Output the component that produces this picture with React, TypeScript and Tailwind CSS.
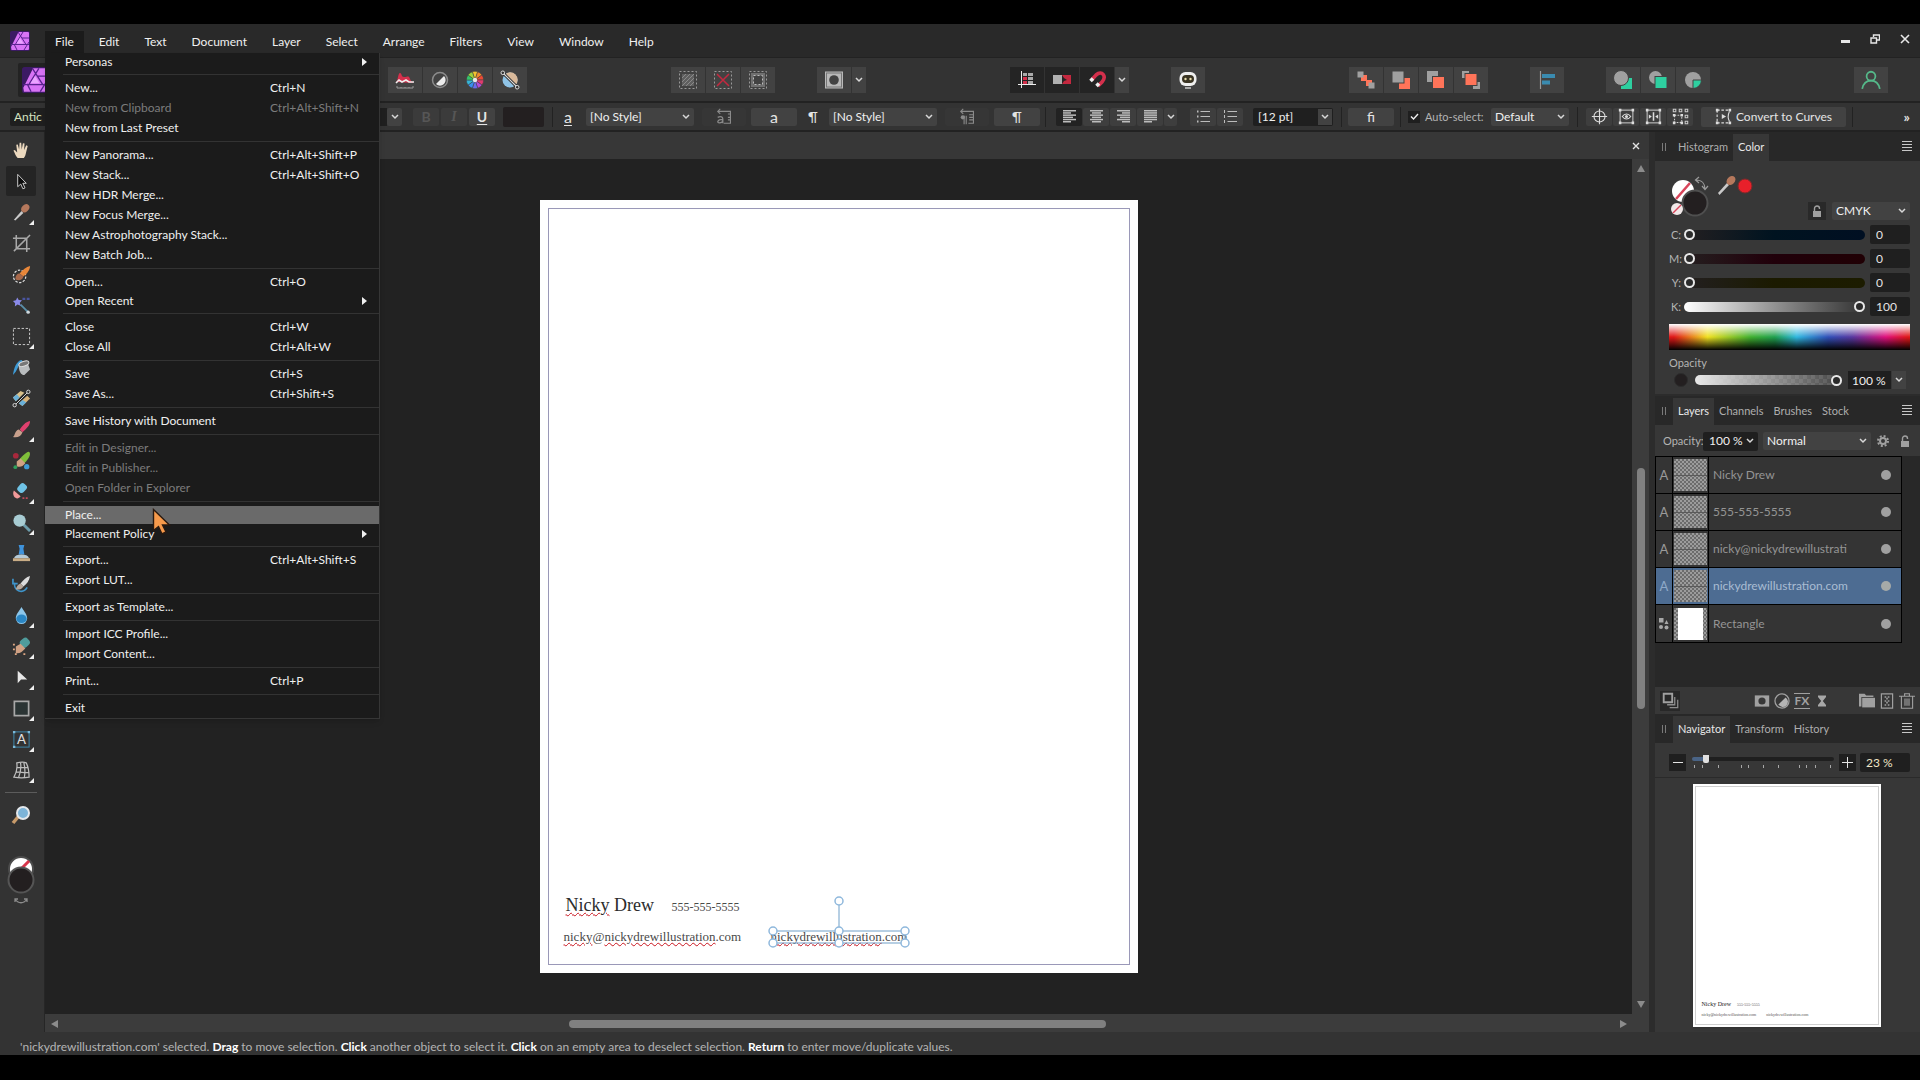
import type { ReactNode } from 'react'
import clsx from 'clsx'

const MENUS = ['File', 'Edit', 'Text', 'Document', 'Layer', 'Select', 'Arrange', 'Filters', 'View', 'Window', 'Help']

interface MenuEntry {
  label: string
  keys?: string
  disabled?: boolean
  submenu?: boolean
  active?: boolean
}

// One inner array per block between separators
const FILE_MENU: MenuEntry[][] = [
  [{ label: 'Personas', submenu: true }],
  [
    { label: 'New...', keys: 'Ctrl+N' },
    { label: 'New from Clipboard', keys: 'Ctrl+Alt+Shift+N', disabled: true },
    { label: 'New from Last Preset' },
  ],
  [
    { label: 'New Panorama...', keys: 'Ctrl+Alt+Shift+P' },
    { label: 'New Stack...', keys: 'Ctrl+Alt+Shift+O' },
    { label: 'New HDR Merge...' },
    { label: 'New Focus Merge...' },
    { label: 'New Astrophotography Stack...' },
    { label: 'New Batch Job...' },
  ],
  [{ label: 'Open...', keys: 'Ctrl+O' }, { label: 'Open Recent', submenu: true }],
  [{ label: 'Close', keys: 'Ctrl+W' }, { label: 'Close All', keys: 'Ctrl+Alt+W' }],
  [{ label: 'Save', keys: 'Ctrl+S' }, { label: 'Save As...', keys: 'Ctrl+Shift+S' }],
  [{ label: 'Save History with Document' }],
  [
    { label: 'Edit in Designer...', disabled: true },
    { label: 'Edit in Publisher...', disabled: true },
    { label: 'Open Folder in Explorer', disabled: true },
  ],
  [{ label: 'Place...', active: true }, { label: 'Placement Policy', submenu: true }],
  [{ label: 'Export...', keys: 'Ctrl+Alt+Shift+S' }, { label: 'Export LUT...' }],
  [{ label: 'Export as Template...' }],
  [{ label: 'Import ICC Profile...' }, { label: 'Import Content...' }],
  [{ label: 'Print...', keys: 'Ctrl+P' }],
  [{ label: 'Exit' }],
]

function Svg({ size = 20, children }: { size?: number; children: ReactNode }) {
  return (
    <svg width={size} height={size} viewBox="0 0 20 20" fill="none" className="shrink-0" aria-hidden="true">
      {children}
    </svg>
  )
}

function Chevron() {
  return (
    <svg width="8" height="6" viewBox="0 0 8 6" fill="none" stroke="#d8d8d8" strokeWidth="1.5" className="shrink-0" aria-hidden="true">
      <path d="M1 1l3 3 3-3" />
    </svg>
  )
}

function AppLogo({ size }: { size: number }) {
  return (
    <Svg size={size}>
      <rect width="20" height="20" rx="2" fill="#3b1a63" />
      <path d="M8.500 1H18a1 1 0 011 1v16a1 1 0 01-1 1H1.500L1 16z" fill="#d873f5" />
      <path d="M8 1l8 12.500M13 1L5 14M19 7l-7 0M1 13.500h18M7 19l-3-6M14 19l5-8" stroke="#5a2390" strokeWidth="1" />
      <path d="M10 7l3.500 5.500h-7z" fill="#e9a4ff" />
    </Svg>
  )
}

/* Main toolbar */

function ToolbarButton({ label, dark, children }: { label: string; dark?: boolean; children: ReactNode }) {
  return (
    <button
      aria-label={label}
      className={clsx('flex h-[26px] w-[34px] items-center justify-center', dark ? 'bg-[#242424]' : 'bg-[#424242]')}
    >
      {children}
    </button>
  )
}

function DropButton({ label }: { label: string }) {
  return (
    <button aria-label={label} className="flex h-[26px] w-[14px] items-center justify-center bg-[#424242]">
      <Chevron />
    </button>
  )
}

const WHEEL = ['#f2c230', '#f08a2c', '#ec4a35', '#e23a6e', '#b44ad8', '#6a6cf0', '#3a8df0', '#35b5d8', '#35c46a', '#9fd23c']

function ColorWheelIcon() {
  return (
    <Svg>
      {WHEEL.map((color, i) => (
        <path key={color} d="M10 10L7.300 1.800a8.600 8.600 0 015.400 0z" fill={color} stroke="#424242" strokeWidth="0.5" transform={`rotate(${i * 36} 10 10)`} />
      ))}
      <circle cx="10" cy="10" r="2.200" fill="#e8e8e8" />
    </Svg>
  )
}

function Toolbar() {
  return (
    <div className="flex h-[46px] items-center border-t border-b-2 border-t-[#222222] border-b-[#222222] bg-[#333333] pr-8">
      <button aria-label="Photo Persona" className="ml-[18px] flex h-[34px] w-[34px] items-center justify-center rounded-xs bg-[#232323]">
        <AppLogo size={26} />
      </button>
      <div className="ml-[336px] flex gap-px">
        <ToolbarButton label="Auto Levels">
          <Svg>
            <path d="M1 12c2-1 2-9 4-9s1 4 4 4 4-1 5 0 1 4 4 5v1z" fill="#d4304c" />
            <path d="M1 13l3-3 3 2 4-2 3 2h5" stroke="#eee" strokeWidth="1.600" />
            <path d="M2 16v2M2 18h16M18 16v2M6 17v1M10 17v1M14 17v1" stroke="#999" />
          </Svg>
        </ToolbarButton>
        <ToolbarButton label="Auto Contrast">
          <Svg>
            <circle cx="10" cy="10" r="7.500" stroke="#8c8c8c" strokeWidth="1.500" />
            <path d="M14 6a5.600 5.600 0 11-8 8z" fill="#ececec" />
          </Svg>
        </ToolbarButton>
        <ToolbarButton label="Auto Colors">
          <ColorWheelIcon />
        </ToolbarButton>
        <ToolbarButton label="Auto White Balance">
          <Svg>
            <circle cx="10" cy="10" r="7.500" fill="#8fc3e6" />
            <path d="M4.700 4.700A7.500 7.500 0 1115.300 15.300z" fill="#d9b99a" />
            <path d="M3 3l14 14" stroke="#222" strokeWidth="3" />
            <path d="M3 3l14 14" stroke="#ddd" strokeWidth="1.200" />
            <circle cx="2.800" cy="2.800" r="1.800" fill="#333" stroke="#ddd" />
            <circle cx="17.200" cy="17.200" r="1.800" fill="#333" stroke="#ddd" />
          </Svg>
        </ToolbarButton>
      </div>
      <div className="ml-36 flex gap-px">
        <ToolbarButton label="Select All">
          <Svg>
            <rect x="1.500" y="1.500" width="17" height="17" stroke="#999" strokeDasharray="2 2" />
            <path d="M4 4h12v12H4z" fill="#606060" />
            <path d="M4 8l4-4M4 12l8-8M4 16L16 4M8 16l8-8M12 16l4-4" stroke="#8a8a8a" />
          </Svg>
        </ToolbarButton>
        <ToolbarButton label="Deselect">
          <Svg>
            <rect x="1.500" y="1.500" width="17" height="17" stroke="#999" strokeDasharray="2 2" />
            <path d="M4 4l12 12M16 4L4 16" stroke="#c4283f" strokeWidth="1.500" />
          </Svg>
        </ToolbarButton>
        <ToolbarButton label="Invert Selection">
          <Svg>
            <rect x="1.500" y="1.500" width="17" height="17" stroke="#999" strokeDasharray="2 2" />
            <rect x="3" y="3" width="14" height="14" fill="#707070" />
            <rect x="5.500" y="5.500" width="9" height="9" fill="#424242" stroke="#bbb" strokeDasharray="2 2" />
          </Svg>
        </ToolbarButton>
      </div>
      <div className="ml-[42px] flex gap-px">
        <ToolbarButton label="Quick Mask">
          <Svg>
            <rect x="1" y="1.500" width="18" height="17" fill="#b9b9b9" />
            <rect x="2.500" y="3" width="15" height="14" stroke="#777" />
            <circle cx="10" cy="10" r="4.800" fill="#424242" />
          </Svg>
        </ToolbarButton>
        <DropButton label="Quick Mask options" />
      </div>
      <div className="ml-36 flex gap-px">
        <ToolbarButton label="Force Pixel Alignment" dark>
          <Svg>
            <path d="M6 3h4v3H6zM11 3h5v3h-5zM11 7h5v3h-5zM11 11h5v3h-5z" fill="#aaa" />
            <path d="M6 7h4v3H6zM6 11h4v3H6z" fill="#d4304c" />
            <path d="M4.500 1v17M1 14.500h18" stroke="#eee" />
          </Svg>
        </ToolbarButton>
        <ToolbarButton label="Move by Whole Pixels" dark>
          <Svg>
            <rect x="1" y="5" width="9" height="9" fill="#b0b0b0" />
            <path d="M10 5h9v9h-9l2-3 3-1-3-2z" fill="#c4283f" />
          </Svg>
        </ToolbarButton>
        <ToolbarButton label="Snapping" dark>
          <Svg>
            <path d="M5 9.500l4-4.500c6-5 11 1 6 7l-4 4" stroke="#d4304c" strokeWidth="3.600" />
            <path d="M3.500 11l2.500-2.500M9.500 16l2.500-2.500" stroke="#eee" strokeWidth="3.600" />
          </Svg>
        </ToolbarButton>
        <DropButton label="Snapping options" />
      </div>
      <div className="ml-[42px] flex">
        <ToolbarButton label="Assistant">
          <Svg>
            <rect x="1.500" y="2" width="17" height="14" rx="6" fill="#efefef" />
            <rect x="4" y="5" width="12" height="8" rx="4" fill="#3a3423" />
            <circle cx="7.500" cy="9" r="1.200" fill="#e9dfae" />
            <circle cx="12.500" cy="9" r="1.200" fill="#e9dfae" />
            <path d="M7 18h6" stroke="#ccc" strokeWidth="1.500" />
          </Svg>
        </ToolbarButton>
      </div>
      <div className="ml-auto flex gap-px">
        <ToolbarButton label="Move to Back">
          <Svg>
            <path d="M5 5h6v5h5v6h-6v-5H5z" fill="#ff7459" />
            <rect x="1.500" y="1.500" width="6" height="6" fill="#a0a0a0" />
            <rect x="12.500" y="12.500" width="6" height="6" fill="#a0a0a0" />
          </Svg>
        </ToolbarButton>
        <ToolbarButton label="Back One">
          <Svg>
            <rect x="8" y="8" width="11" height="11" fill="#ff7459" />
            <rect x="1" y="1" width="12" height="12" fill="#a0a0a0" stroke="#424242" />
          </Svg>
        </ToolbarButton>
        <ToolbarButton label="Forward One">
          <Svg>
            <rect x="1" y="1" width="11" height="11" fill="#a0a0a0" />
            <rect x="6.500" y="6.500" width="12" height="12" fill="#ff7459" stroke="#424242" />
          </Svg>
        </ToolbarButton>
        <ToolbarButton label="Move to Front">
          <Svg>
            <path d="M1 1h7v7H1zM12 12h7v7h-7z" fill="#a0a0a0" />
            <rect x="4" y="3.500" width="12" height="12" fill="#ff7459" stroke="#424242" />
          </Svg>
        </ToolbarButton>
      </div>
      <div className="ml-[42px] flex">
        <ToolbarButton label="Alignment">
          <Svg>
            <path d="M3.500 1v18" stroke="#9a9a9a" strokeWidth="1.200" />
            <path d="M5 4h13v4H5zM5 10.500h8v4H5z" fill="#3a8bb0" />
          </Svg>
        </ToolbarButton>
      </div>
      <div className="ml-[42px] flex gap-px">
        <ToolbarButton label="Insert Behind">
          <Svg>
            <rect x="8" y="8" width="11" height="11" fill="#2ecfa0" />
            <circle cx="8" cy="8" r="7.500" fill="#a0a0a0" stroke="#424242" />
          </Svg>
        </ToolbarButton>
        <ToolbarButton label="Insert in Front">
          <Svg>
            <circle cx="7.500" cy="7.500" r="6.500" fill="#a0a0a0" />
            <rect x="7" y="6.500" width="12" height="12" fill="#2ecfa0" stroke="#424242" />
          </Svg>
        </ToolbarButton>
        <ToolbarButton label="Insert Inside">
          <Svg>
            <circle cx="10" cy="10" r="8" fill="#a0a0a0" />
            <path d="M10 10h8.500a8.500 8.500 0 01-8.500 8.500z" fill="#2ecfa0" stroke="#424242" />
          </Svg>
        </ToolbarButton>
      </div>
      <div className="ml-36 flex">
        <ToolbarButton label="Account">
          <Svg size={22}>
            <circle cx="10" cy="6.500" r="4" stroke="#55b98a" strokeWidth="1.600" />
            <path d="M2 18c1-5 4-7.500 8-7.500s7 2.500 8 7.500" stroke="#55b98a" strokeWidth="1.600" />
          </Svg>
        </ToolbarButton>
      </div>
    </div>
  )
}

/* Context toolbar */

function ContextButton({ label, className, children }: { label: string; className?: string; children: ReactNode }) {
  return (
    <button aria-label={label} className={clsx('flex h-[18px] items-center justify-center rounded-xs', className)}>
      {children}
    </button>
  )
}

function Divider({ className }: { className?: string }) {
  return <div className={clsx('h-5 w-px bg-[#222222]', className)} />
}

function Select({ label, value, className }: { label: string; value: string; className?: string }) {
  return (
    <div className={clsx('relative flex h-[18px] items-center rounded-xs bg-[#424242]', className)}>
      <select aria-label={label} defaultValue={value} className="h-full w-full appearance-none pl-1 text-xs/4 text-[#f0f0f0] outline-none">
        <option>{value}</option>
      </select>
      <span className="pointer-events-none absolute right-1">
        <Chevron />
      </span>
    </div>
  )
}

const ALIGN_LINES = {
  left: [13, 8, 13, 10, 13, 8],
  center: [13, 9, 13, 9, 13, 9],
  right: [13, 8, 13, 10, 13, 8],
  justify: [13, 13, 13, 13, 13, 8],
}

function AlignIcon({ kind }: { kind: keyof typeof ALIGN_LINES }) {
  return (
    <svg width="13" height="13" viewBox="0 0 13 13" fill="#bcbcbc" aria-hidden="true">
      {ALIGN_LINES[kind].map((w, i) => (
        <rect key={i} y={i * 2.2} x={kind === 'right' ? 13 - w : kind === 'center' ? (13 - w) / 2 : 0} width={w} height="1.500" />
      ))}
    </svg>
  )
}

function ListIcon({ numbered }: { numbered?: boolean }) {
  return (
    <svg width="14" height="13" viewBox="0 0 14 13" fill="none" stroke="#bcbcbc" aria-hidden="true">
      <path d="M4.500 1.500H14M4.500 6.500H14M4.500 11.500H14" strokeWidth="1.200" />
      <path d={numbered ? 'M1.500 0v3M1.500 5v3M1.500 10v3' : 'M1 1.500h1.500M1 6.500h1.500M1 11.500h1.500'} strokeWidth={numbered ? 1 : 1.8} />
    </svg>
  )
}

function FrameIcon({ children }: { children: ReactNode }) {
  return (
    <Svg size={17}>
      <rect x="2.500" y="2.500" width="15" height="15" stroke="#ccc" strokeWidth="1.200" />
      <path d="M1 1h3v3H1zM16 1h3v3h-3zM1 16h3v3H1zM16 16h3v3h-3z" fill="#ddd" />
      {children}
    </Svg>
  )
}

function ContextBar() {
  return (
    <div className="flex h-[29px] items-center border-b-2 border-[#222222] bg-[#333333] pl-2.5 text-[#e4e4e4]">
      <div className="flex w-[392px]">
        <input aria-label="Font family" defaultValue="Antic Slab" className="h-[18px] w-[377px] min-w-0 rounded-l-xs bg-[#1f1f1f] px-1 text-xs/4 text-[#d5e2c0] outline-none" />
        <ContextButton label="Font list" className="w-[15px] bg-[#424242]">
          <Chevron />
        </ContextButton>
      </div>
      <div className="ml-[11px] flex gap-0.5 font-bold">
        <ContextButton label="Bold" className="w-[26px] bg-[#3b3b3b] text-sm/4 text-[#565656]">
          B
        </ContextButton>
        <ContextButton label="Italic" className="w-[26px] bg-[#3b3b3b] text-sm/4 text-[#565656]">
          <i className="font-['Liberation_Serif',serif]">I</i>
        </ContextButton>
        <ContextButton label="Underline" className="w-[26px] bg-[#424242] text-sm/4 underline underline-offset-2">
          U
        </ContextButton>
      </div>
      <button aria-label="Text color" className="ml-2 h-5 w-[41px] rounded-xs bg-[#231f20]" />
      <Divider className="ml-2" />
      <span className="ml-[11px] w-2.5 text-base/4 underline underline-offset-2">a</span>
      <Select label="Character style" value="[No Style]" className="ml-3 w-[108px]" />
      <ContextButton label="Update character style" className="ml-2 w-[44px] bg-[#363636]">
        <Svg size={17}>
          <path d="M3 4h14v14H9M14 7h3M14 11h3M14 14h3M5 1L2 4l3 3" stroke="#8a8a8a" strokeWidth="1.300" />
          <path d="M2 11c4-2 6 0 6 2v5M8 13.500c-7 0-7 4-4 4 2 0 4-1 4-3" stroke="#8a8a8a" strokeWidth="1.500" />
        </Svg>
      </ContextButton>
      <ContextButton label="Character panel" className="ml-[5px] w-[46px] bg-[#424242] text-base/4">
        a
      </ContextButton>
      <span className="ml-[11px] w-2 text-sm/4">¶</span>
      <Select label="Paragraph style" value="[No Style]" className="ml-[13px] w-[108px]" />
      <ContextButton label="Update paragraph style" className="ml-2 w-[44px] bg-[#363636]">
        <Svg size={17}>
          <path d="M3 4h14v14h-6M12 8h5M12 11h5M12 14h5M5 1L2 4l3 3M6 9v10M8.500 9v10" stroke="#8a8a8a" strokeWidth="1.300" />
          <circle cx="4.500" cy="11" r="2.500" fill="#8a8a8a" />
        </Svg>
      </ContextButton>
      <ContextButton label="Paragraph panel" className="ml-[5px] w-[46px] bg-[#424242] text-sm/4">
        ¶
      </ContextButton>
      <Divider className="ml-[5px]" />
      <div className="ml-2.5 flex gap-px">
        <ContextButton label="Align left" className="w-[26px] bg-[#222222]">
          <AlignIcon kind="left" />
        </ContextButton>
        <ContextButton label="Align center" className="w-[26px] bg-[#3e3e3e]">
          <AlignIcon kind="center" />
        </ContextButton>
        <ContextButton label="Align right" className="w-[26px] bg-[#3e3e3e]">
          <AlignIcon kind="right" />
        </ContextButton>
        <ContextButton label="Justify" className="w-[26px] bg-[#3e3e3e]">
          <AlignIcon kind="justify" />
        </ContextButton>
        <ContextButton label="Justify options" className="w-[13px] bg-[#3e3e3e]">
          <Chevron />
        </ContextButton>
      </div>
      <div className="ml-[13px] flex gap-px">
        <ContextButton label="Bullets" className="w-[26px] bg-[#3e3e3e]">
          <ListIcon />
        </ContextButton>
        <ContextButton label="Numbering" className="w-[26px] bg-[#3e3e3e]">
          <ListIcon numbered />
        </ContextButton>
      </div>
      <div className="ml-2.5 flex w-20 rounded-xs bg-[#1f1f1f] p-px">
        <input aria-label="Leading" defaultValue="[12 pt]" className="w-[64px] px-1 text-xs/4 text-[#f0f0f0] outline-none" />
        <button aria-label="Leading options" className="flex w-[14px] items-center justify-center bg-[#424242]">
          <Chevron />
        </button>
      </div>
      <Divider className="ml-2" />
      <ContextButton label="Ligatures" className="ml-1.5 w-[46px] bg-[#424242] text-sm/4">
        fi
      </ContextButton>
      <Divider className="ml-1.5" />
      <label className="ml-[7px] flex items-center gap-[5px] text-[11px]/4 text-[#b4b4b4]">
        <span className="relative flex size-3 items-center justify-center bg-[#1f1f1f]">
          <input type="checkbox" defaultChecked className="absolute inset-0 appearance-none" />
          <svg width="9" height="7" viewBox="0 0 9 7" fill="none" stroke="#eee" strokeWidth="1.400" className="relative" aria-hidden="true">
            <path d="M1 3.500l2.500 2.500L8 1" />
          </svg>
        </span>
        <span className="w-[62px] whitespace-nowrap">Auto-select:</span>
      </label>
      <Select label="Auto-select" value="Default" className="ml-1 w-[78px]" />
      <Divider className="ml-2" />
      <div className="ml-2 flex gap-px">
        <ContextButton label="Transform origin" className="w-[26px] bg-[#3e3e3e]">
          <Svg size={17}>
            <circle cx="10" cy="10" r="6.500" stroke="#ddd" strokeWidth="1.300" />
            <path d="M10 1v18M1 10h18" stroke="#ddd" strokeWidth="1.300" />
          </Svg>
        </ContextButton>
        <ContextButton label="Hide selection while dragging" className="w-[26px] bg-[#3e3e3e]">
          <FrameIcon>
            <path d="M5 10c3-4 7-4 10 0-3 4-7 4-10 0z" stroke="#ddd" strokeWidth="1.300" />
            <circle cx="10" cy="10" r="1.800" fill="#ddd" />
          </FrameIcon>
        </ContextButton>
        <ContextButton label="Show alignment handles" className="w-[26px] bg-[#3e3e3e]">
          <FrameIcon>
            <path d="M10 5v10" stroke="#ddd" strokeWidth="1.800" />
            <path d="M4.500 7.500L8 10l-3.500 2.500zM15.500 7.500L12 10l3.500 2.500z" fill="#ddd" />
          </FrameIcon>
        </ContextButton>
        <ContextButton label="Transform objects separately" className="w-[26px] bg-[#3e3e3e]">
          <Svg size={17}>
            <path d="M1.500 1.500h3v3h-3zM8.500 1.500h3v3h-3zM15.500 1.500h3v3h-3zM15.500 8.500h3v3h-3zM15.500 15.500h3v3h-3z" stroke="#ccc" strokeWidth="1.200" />
            <path d="M3 8.500h8.500V17H3z" stroke="#ccc" strokeWidth="1.200" strokeDasharray="2 1.500" />
            <path d="M1 7h3v3H1zM10 7h3v3h-3zM1 16h3v3H1zM10 16h3v3h-3z" fill="#ddd" />
          </Svg>
        </ContextButton>
      </div>
      <button className="ml-2 flex h-5 w-[145px] items-center justify-center gap-1 rounded-xs bg-[#424242] text-xs/4 whitespace-nowrap">
        <Svg size={17}>
          <path d="M2.500 2.500h13M2.500 2.500v15M2.500 17.500h14" stroke="#ddd" strokeWidth="1.300" strokeDasharray="3 2" />
          <path d="M17 4c-2 4-2 8 0 12" stroke="#ddd" strokeWidth="1.300" />
          <path d="M1 1h3v3H1zM16 1h3v3h-3zM1 16h3v3H1zM16 16h3v3h-3zM8 7l5 3-5 3z" fill="#ddd" />
        </Svg>
        Convert to Curves
      </button>
      <Divider className="ml-1.5" />
      <button aria-label="More" className="mr-2.5 ml-auto text-sm/4 font-bold">
        »
      </button>
    </div>
  )
}

/* Tools down the left side */

const TOOLS: { name: string; flyout?: boolean; active?: boolean; art: ReactNode }[] = [
  {
    name: 'View',
    art: <path d="M6 18c-2-2-3-5-4.500-8l1.500-.5L5.500 12 4.500 4l1.600-.3L7.500 9 8 1.800h1.700L10.200 9l1.300-6.600 1.700.2-.5 7 2.300-5 1.500.6-1.700 7c-.6 3-1 4-2.300 5.800z" fill="#ecd9bf" />,
  },
  {
    name: 'Move',
    active: true,
    art: <path d="M6 2.500v13l3.200-2.800 2.300 5 2.200-1-2.300-4.800H15z" fill="#0c0c0c" stroke="#d0d0d0" />,
  },
  {
    name: 'Color Picker',
    flyout: true,
    art: (
      <>
        <path d="M2 17.500l8-9 2 2-8.500 8z" fill="#c9c9c9" />
        <ellipse cx="14" cy="5.500" rx="4.800" ry="3.600" transform="rotate(-45 14 5.500)" fill="#b5785c" />
      </>
    ),
  },
  {
    name: 'Crop',
    art: <path d="M4.500 1v14.500H19M1 4.500h14.500V19M2 18L19 1" stroke="#a8a8a8" strokeWidth="1.600" />,
  },
  {
    name: 'Selection Brush',
    art: (
      <>
        <circle cx="8" cy="12" r="6.500" stroke="#ddd" strokeWidth="1.300" strokeDasharray="2.500 1.500" />
        <path d="M8 9c3-4 7-7 11-8 0 4-3 8-7 11z" fill="#e8873a" />
        <path d="M3.500 15c0-4 2-6 4.500-6l4 3c-1 4-5 5-8.500 3z" fill="#a8694b" />
      </>
    ),
  },
  {
    name: 'Flood Select',
    art: (
      <>
        <path d="M9 9l8 8" stroke="#5a8fa8" strokeWidth="2" />
        <circle cx="17" cy="17" r="1.800" fill="#cfd8dd" />
        <path d="M5.500 1.500l1.600 2.800 3.400.2-2.300 2.500.9 3.300-3.300-1.300L3 11l.3-3.300L1 5.200l3.200-.7z" fill="#8a8ae8" />
        <path d="M11 3h3M15.500 3h3" stroke="#4a55a0" strokeWidth="2.500" />
      </>
    ),
  },
  {
    name: 'Marquee Selection',
    flyout: true,
    art: <rect x="1.500" y="1.500" width="17" height="17" stroke="#cfcfcf" strokeDasharray="2.500 1.800" />,
  },
  {
    name: 'Flood Fill',
    art: (
      <>
        <path d="M1 18C2 10 5 3 10 2c2 1 1 3-1 4-3 2-3 7-8 12z" fill="#3f9bd6" />
        <path d="M7 7l9-3 3 8-6 6c-4 0-6-5-6-11z" fill="#b9bcbe" />
        <ellipse cx="12.500" cy="6" rx="5.500" ry="2.500" transform="rotate(-18 12.500 6)" fill="#777" stroke="#ddd" />
      </>
    ),
  },
  {
    name: 'Gradient',
    art: (
      <>
        <path d="M1 9l8-7 4 2-9 9z" fill="#d9c08a" />
        <path d="M1 9l3 4 4-4-3-3.500z" fill="#6ab0d8" />
        <path d="M7 15l9-8 3 3-8 8z" fill="#d9b27a" />
        <path d="M7 15l4 3 4-4-4-2.500z" fill="#6ab0d8" />
        <path d="M3 17L17 3" stroke="#222" strokeWidth="2.500" />
        <path d="M3 17L17 3" stroke="#ddd" />
        <circle cx="2.800" cy="17" r="1.800" fill="#333" stroke="#ddd" />
        <circle cx="17.200" cy="3" r="1.800" fill="#333" stroke="#ddd" />
      </>
    ),
  },
  {
    name: 'Paint Brush',
    flyout: true,
    art: (
      <>
        <path d="M8 10c3-4 6-8 11-9 0 5-4 8-8 12z" fill="#e0406e" />
        <path d="M1 18c2-1 2-7 6-8l4 3c-1 4-5 6-10 5z" fill="#c8a08c" />
      </>
    ),
  },
  {
    name: 'Color Replacement',
    art: (
      <>
        <path d="M8 9c1-2 8-9 10-8s1 6-5 12z" fill="#7fbf3a" />
        <path d="M5 11l4-3 5 5c-3 4-6 4-9 3z" fill="#d0a184" />
        <circle cx="4" cy="5" r="3" fill="#a8283c" />
        <circle cx="3.500" cy="17" r="2" fill="#2ea05a" />
        <circle cx="15.500" cy="16.500" r="2.800" fill="#3f9bd6" />
      </>
    ),
  },
  {
    name: 'Erase Brush',
    flyout: true,
    art: (
      <>
        <rect x="7" y="1.500" width="8" height="10" rx="3" transform="rotate(42 11 6)" fill="#6fc3e6" />
        <path d="M2 9l7 6c-2 3-5 3-7 0-1-2-1-4 0-6z" fill="#f29a9a" />
        <path d="M11 17h2M14.500 17h2" stroke="#c04a5a" strokeWidth="2" />
      </>
    ),
  },
  {
    name: 'Dodge Brush',
    flyout: true,
    art: (
      <>
        <path d="M11 11l8 8" stroke="#6c9cab" strokeWidth="3" />
        <circle cx="8" cy="8" r="6.500" fill="#a8ccd3" />
      </>
    ),
  },
  {
    name: 'Clone Brush',
    art: (
      <>
        <path d="M7 1h6l-1 4 1 6H7l1-6z" fill="#3f93dc" />
        <path d="M2 15c1-3 4-4 8-4s7 1 8 4z" fill="#b5c9d6" />
        <path d="M1 15h18v3H1z" fill="#c9ad86" />
      </>
    ),
  },
  {
    name: 'Undo Brush',
    art: (
      <>
        <path d="M3 8c-2 8 8 13 13 5M1 4v5h5" stroke="#3f93c8" strokeWidth="1.800" />
        <path d="M9 9c3-4 6-7 10-8-1 5-3 8-7 11z" fill="#dcdcdc" />
        <path d="M4 15c1-3 2-5 5-6l3 3c-2 3-5 4-8 3z" fill="#b8a89c" />
      </>
    ),
  },
  {
    name: 'Blur Brush',
    flyout: true,
    art: (
      <>
        <path d="M10 1c3 5 6 8 6 12a6 6 0 01-12 0c0-4 3-7 6-12z" fill="#8cc6ea" />
        <ellipse cx="10" cy="13.500" rx="5.500" ry="4.500" fill="#2a86c4" />
      </>
    ),
  },
  {
    name: 'Healing Brush',
    flyout: true,
    art: (
      <>
        <rect x="9" y="1" width="9" height="10" rx="3.500" transform="rotate(50 13.500 6)" fill="#4f9c9c" />
        <path d="M4 10l5-3 5 5c-3 3-6 6-10 5z" fill="#d0a184" />
        <path d="M1 8h2M1 13h2M3 18h2M12 18h2" stroke="#e0a884" strokeWidth="2" />
      </>
    ),
  },
  { name: 'Node', flyout: true, art: <path d="M6 3v13l3.500-4H16z" fill="#e8e8e8" /> },
  { name: 'Rectangle', flyout: true, art: <rect x="2.500" y="2.500" width="15" height="15" fill="#2b3434" stroke="#a8a8a8" strokeWidth="1.800" /> },
  {
    name: 'Artistic Text',
    flyout: true,
    art: (
      <>
        <rect x="2" y="2" width="16" height="16" stroke="#3f8bb0" />
        <path d="M1 1h2.500v2.500H1zM16.500 1H19v2.500h-2.500zM1 16.500h2.500V19H1z" fill="#7ab8d8" />
        <text x="10" y="15" textAnchor="middle" fontSize="14" fill="#e0e0e0">A</text>
      </>
    ),
  },
  {
    name: 'Mesh Warp',
    flyout: true,
    art: <path d="M5 2c4-1 8-1 10 0 2 4 3 8 3 15-5 1-11 1-16 0 3-5 4-9 3-15zM9 2c1 6 0 10-2 15M12.500 2c1.500 6 1.500 10 .5 15.500M5 7h12M3.500 12c4-1 10 1 14 0" stroke="#bdbdbd" strokeWidth="1.300" />,
  },
]

function ToolBox() {
  return (
    <div className="flex w-[45px] shrink-0 flex-col items-center border-r border-[#262626] bg-[#333333] pt-[3px] pr-0.5">
      {TOOLS.map((tool) => (
        <button
          key={tool.name}
          aria-label={`${tool.name} Tool`}
          className={clsx('relative mb-px flex h-[30px] w-[30px] items-center justify-center rounded-xs', tool.active && 'bg-[#242424]')}
        >
          <Svg size={19}>{tool.art}</Svg>
          {tool.flyout && (
            <svg width="5" height="5" viewBox="0 0 5 5" fill="#f0f0f0" className="absolute right-0.5 bottom-0.5" aria-hidden="true">
              <path d="M5 0v5H0z" />
            </svg>
          )}
        </button>
      ))}
      <div className="mt-1.5 h-px w-8 bg-[#5c5c5c]" />
      <button aria-label="Zoom Tool" className="mt-3 flex size-5 items-center justify-center">
        <Svg>
          <path d="M7 12l-5 6" stroke="#c79a6a" strokeWidth="3.500" />
          <circle cx="12" cy="8" r="6" fill="#7db4d8" stroke="#e4e8ec" strokeWidth="2" />
        </Svg>
      </button>
      <svg width="28" height="50" viewBox="0 0 28 50" fill="none" className="mt-[30px]" aria-hidden="true">
        <circle cx="14" cy="14" r="12" fill="#fff" stroke="#4c4c4c" strokeWidth="2" />
        <path d="M10 18L22 6" stroke="#d8344a" strokeWidth="3" />
        <circle cx="14" cy="25" r="12.500" fill="#231f20" stroke="#555" strokeWidth="2" />
        <path d="M8 44c3 5 9 5 12 0M8 47v-3h3M20 47v-3h-3" stroke="#8c8c8c" strokeWidth="1.300" />
      </svg>
    </div>
  )
}

/* Canvas */

const HANDLES = [[6, 36], [72, 36], [138, 36], [6, 48], [72, 48], [138, 48], [72, 6]]

function Misspelled({ children }: { children: string }) {
  return <span className="underline decoration-[#c8141e] decoration-wavy decoration-1 underline-offset-1">{children}</span>
}

function Artboard() {
  return (
    <div className="relative aspect-[598/773] w-[598px] bg-white font-['Liberation_Serif',serif] text-[#4a4a4a]">
      <div className="absolute inset-2 border border-[#9a98b8]" />
      <p className="absolute bottom-[54px] left-[26px] text-lg/7 text-[#2c2c2c]">
        <Misspelled>Nicky</Misspelled> Drew
      </p>
      <p className="absolute bottom-[58px] left-[132px] text-xs/4">555-555-5555</p>
      <p className="absolute bottom-7 left-6 text-[13px]/4">
        <Misspelled>nicky</Misspelled>@<Misspelled>nickydrewillustration</Misspelled>.com
      </p>
      <p className="absolute bottom-7 left-[231px] text-[13px]/4">
        <Misspelled>nickydrewillustration</Misspelled>.com
      </p>
      <svg width="144" height="54" viewBox="0 0 144 54" fill="none" className="absolute bottom-6 left-[227px]" aria-hidden="true">
        <path d="M6 36h132v12H6zM72 6v30" stroke="#6f9fc8" />
        {HANDLES.map(([cx, cy]) => (
          <circle key={`${cx}-${cy}`} cx={cx} cy={cy} r="4" fill="#fff" stroke="#8fb8dc" strokeWidth="1.500" />
        ))}
      </svg>
    </div>
  )
}

function Workspace() {
  return (
    <main className="flex min-w-0 flex-1 flex-col">
      <div className="flex h-[27px] items-center justify-end bg-[#373737] pr-[9px]">
        <button aria-label="Close document">
          <svg width="8" height="8" viewBox="0 0 8 8" stroke="#e4e4e4" strokeWidth="1.400" aria-hidden="true">
            <path d="M1 1l6 6M7 1L1 7" />
          </svg>
        </button>
      </div>
      <div className="flex flex-1">
        <div className="flex flex-1 items-center justify-center bg-[#222222]">
          <Artboard />
        </div>
        <div className="flex w-[17px] flex-col items-center bg-[#3c3c3c] py-1.5">
          <svg width="8" height="7" viewBox="0 0 8 7" fill="#8c8c8c" aria-hidden="true">
            <path d="M4 0l4 7H0z" />
          </svg>
          <div className="flex w-2 flex-1 flex-col">
            <div className="flex-[296]" />
            <div className="flex-[240] rounded-full bg-[#808080]" />
            <div className="flex-[292]" />
          </div>
          <svg width="8" height="7" viewBox="0 0 8 7" fill="#8c8c8c" aria-hidden="true">
            <path d="M4 7l4-7H0z" />
          </svg>
        </div>
      </div>
      <div className="flex h-[18px] items-center bg-[#3c3c3c] pt-0.5 pr-[22px] pl-1.5">
        <svg width="7" height="8" viewBox="0 0 7 8" fill="#8c8c8c" aria-hidden="true">
          <path d="M0 4l7-4v8z" />
        </svg>
        <div className="flex h-2 flex-1">
          <div className="flex-[511]" />
          <div className="flex-[538] rounded-full bg-[#808080]" />
          <div className="flex-[514]" />
        </div>
        <svg width="7" height="8" viewBox="0 0 7 8" fill="#8c8c8c" aria-hidden="true">
          <path d="M7 4L0 0v8z" />
        </svg>
      </div>
    </main>
  )
}

/* Right-hand panels */

function PanelTabs({ tabs, active }: { tabs: string[]; active: string }) {
  return (
    <div className="flex h-[29px] items-end bg-[#282828] pr-2">
      <span className="flex h-full w-[18px] items-center justify-center gap-0.5">
        <span className="h-2 w-px bg-[#7a7a7a]" />
        <span className="h-2 w-px bg-[#7a7a7a]" />
      </span>
      {tabs.map((tab) => (
        <button
          key={tab}
          className={clsx('h-[27px] px-[5px] pb-0.5 text-[11px]/4', tab === active ? 'bg-[#373737] text-[#e8e8e8]' : 'text-[#aeaeae]')}
        >
          {tab}
        </button>
      ))}
      <button aria-label="Panel preferences" className="mb-2.5 ml-auto flex w-2.5 flex-col gap-0.5">
        <span className="h-px bg-[#c8c8c8]" />
        <span className="h-px bg-[#c8c8c8]" />
        <span className="h-px bg-[#c8c8c8]" />
        <span className="h-px bg-[#c8c8c8]" />
      </button>
    </div>
  )
}

const THUMB =
  'appearance-none outline-none [&::-webkit-slider-thumb]:size-[11px] [&::-webkit-slider-thumb]:appearance-none [&::-webkit-slider-thumb]:rounded-full [&::-webkit-slider-thumb]:border-2 [&::-webkit-slider-thumb]:border-[#e8e8e8] [&::-webkit-slider-thumb]:bg-[#2a2a2a]'

const CHANNELS = [
  { name: 'C', value: 0, track: 'bg-linear-to-r from-[#231f20] via-[#001320] to-[#000f22]' },
  { name: 'M', value: 0, track: 'bg-linear-to-r from-[#231f20] via-[#20000a] to-[#200004]' },
  { name: 'Y', value: 0, track: 'bg-linear-to-r from-[#231f20] via-[#1b1a00] to-[#1c1c00]' },
  { name: 'K', value: 100, track: 'bg-linear-to-r from-white to-[#333333]' },
]

function LockIcon({ color = '#a0a0a0' }: { color?: string }) {
  return (
    <svg width="10" height="13" viewBox="0 0 10 13" fill="none" aria-hidden="true">
      <path d="M2.500 6V3.500a2.500 2.500 0 015 0V4" stroke={color} strokeWidth="1.400" />
      <rect x="1" y="6" width="8" height="6" fill={color} />
    </svg>
  )
}

function ColorPanel() {
  return (
    <section>
      <PanelTabs tabs={['Histogram', 'Color']} active="Color" />
      <div className="bg-[#373737] pr-2.5 pb-[5px] pl-3.5">
        <div className="flex pt-3.5">
          <svg width="88" height="45" viewBox="0 0 88 45" fill="none" aria-hidden="true">
            <circle cx="14" cy="16" r="11" fill="#fff" />
            <path d="M7 24L21 8" stroke="#d8445a" strokeWidth="2.500" />
            <circle cx="26" cy="28" r="12.500" fill="#231f20" stroke="#4f4f4f" strokeWidth="2" />
            <circle cx="8" cy="34" r="6" fill="#f0e8e8" />
            <path d="M4 38l8-8" stroke="#d8445a" strokeWidth="1.500" />
            <path d="M27 5c6 0 9 4 9 9M30 2l-3.500 3L30 8M33 11l3 3.500L39 11" stroke="#9a9a9a" strokeWidth="1.200" />
            <path d="M49 18l9-10 2 2-9.500 10z" fill="#c9c9c9" />
            <ellipse cx="62" cy="5.500" rx="5" ry="3.800" transform="rotate(-45 62 5.500)" fill="#b5785c" />
            <circle cx="76" cy="11" r="7" fill="#e8202a" stroke="#7a2a2a" />
          </svg>
          <div className="ml-auto flex items-end gap-1.5 self-end">
            <button aria-label="Lock color" className="flex size-[18px] items-center justify-center bg-[#292929]">
              <LockIcon />
            </button>
            <Select label="Color mode" value="CMYK" className="w-[78px]" />
          </div>
        </div>
        <div className="mt-[5px] flex flex-col gap-[5px]">
          {CHANNELS.map((channel) => (
            <div key={channel.name} className="flex items-center">
              <label htmlFor={`channel-${channel.name}`} className="w-3 text-right text-[11px]/4 text-[#b4b4b4]">
                {channel.name}:
              </label>
              <input id={`channel-${channel.name}`} type="range" min="0" max="100" defaultValue={channel.value} className={clsx('ml-[3px] h-2.5 min-w-0 flex-1 rounded-full', THUMB, channel.track)} />
              <input aria-label={`${channel.name} value`} defaultValue={channel.value} className="ml-[5px] h-[19px] w-10 rounded-xs bg-[#1f1f1f] px-1.5 text-xs/4 text-[#e4e4e4] outline-none" />
            </div>
          ))}
        </div>
        <div className="mt-2 h-[26px] bg-[linear-gradient(to_bottom,#fff_0%,transparent_50%,#000_100%),linear-gradient(to_right,#e01818_2%,#f0e020_16%,#40b030_34%,#20a050_44%,#30b8e0_53%,#3050b8_66%,#5838a0_76%,#e0107c_90%,#e01818_99%)]" />
        <label htmlFor="fill-opacity" className="mt-[5px] block text-[11px]/4 text-[#b4b4b4]">
          Opacity
        </label>
        <div className="flex items-center">
          <span className="ml-[5px] size-3.5 rounded-full border border-[#2c2c2c] bg-[#231f20]" />
          <input id="fill-opacity" type="range" min="0" max="100" defaultValue="100" className={clsx('ml-[7px] h-2.5 min-w-0 flex-1 rounded-full bg-[linear-gradient(to_right,#e8e8e8,#3c3c3c88),repeating-conic-gradient(#6c6c6c_0_25%,#4c4c4c_0_50%)] bg-size-[100%_100%,8px_8px]', THUMB)} />
          <input aria-label="Opacity value" defaultValue="100 %" className="ml-1.5 h-[18px] w-[43px] bg-[#1f1f1f] px-1 text-xs/4 text-[#f0f0f0] outline-none" />
          <button aria-label="Opacity options" className="mr-1 ml-px flex h-[18px] w-3.5 items-center justify-center bg-[#424242]">
            <Chevron />
          </button>
        </div>
      </div>
    </section>
  )
}

const LAYERS = [
  { name: 'Nicky Drew', kind: 'text' },
  { name: '555-555-5555', kind: 'text' },
  { name: 'nicky@nickydrewillustrati', kind: 'text' },
  { name: 'nickydrewillustration.com', kind: 'text', selected: true },
  { name: 'Rectangle', kind: 'shape' },
]

function LayersPanel() {
  return (
    <section className="flex flex-1 flex-col border-t-2 border-[#2c2c2c]">
      <PanelTabs tabs={['Layers', 'Channels', 'Brushes', 'Stock']} active="Layers" />
      <div className="flex h-[31px] items-center bg-[#373737] pt-px pl-2">
        <label htmlFor="layer-opacity" className="w-10 text-[11px]/4 text-[#b4b4b4]">
          Opacity:
        </label>
        <div className="flex h-[19px] w-[55px] items-center rounded-xs bg-[#1f1f1f] pr-1">
          <input id="layer-opacity" defaultValue="100 %" className="min-w-0 flex-1 pl-1.5 text-xs/4 text-[#f0f0f0] outline-none" />
          <Chevron />
        </div>
        <Select label="Blend mode" value="Normal" className="ml-[5px] w-[108px]" />
        <button aria-label="Blend ranges" className="ml-1.5">
          <svg width="12" height="12" viewBox="0 0 12 12" fill="none" stroke="#a0a0a0" aria-hidden="true">
            <circle cx="6" cy="6" r="3" strokeWidth="2" />
            <circle cx="6" cy="6" r="5" strokeWidth="2" strokeDasharray="2 1.930" />
          </svg>
        </button>
        <button aria-label="Lock layer" className="ml-[11px]">
          <LockIcon />
        </button>
      </div>
      <div className="flex-1 bg-[#282828] pr-[18px]">
        <ul className="border border-black">
          {LAYERS.map((layer) => (
            <li
              key={layer.name}
              className={clsx('flex h-[37px] items-center border-b border-black pr-2.5 last:border-b-0', layer.selected ? 'bg-[#4d6c92]' : 'bg-[#343434]')}
            >
              <span className={clsx('flex w-4 justify-center text-[13px]/4', layer.selected ? 'text-[#8fa9c9]' : 'text-[#9a9a9a]')}>
                {layer.kind === 'text' ? (
                  'A'
                ) : (
                  <svg width="10" height="12" viewBox="0 0 10 12" fill="#a8a8a8" aria-hidden="true">
                    <path d="M0 0h4.500v4.500H0zM7.500 2l2 4h-4z" />
                    <circle cx="2" cy="9" r="2" />
                    <circle cx="7.500" cy="9.500" r="2" />
                  </svg>
                )}
              </span>
              <span className="flex h-full w-[37px] items-center justify-center border-x border-black">
                <span className="flex h-8 w-[33px] items-center justify-center overflow-hidden bg-[repeating-conic-gradient(#9c9c9c_0_25%,#6c6c6c_0_50%)] bg-size-[4px_4px]">
                  {layer.kind === 'text' ? <span className="h-px w-full bg-[#5a5a5a]" /> : <span className="h-full w-[25px] bg-white" />}
                </span>
              </span>
              <span className={clsx('ml-1 flex-1 text-xs/5 whitespace-nowrap', layer.selected ? 'text-[#a9bcd2]' : 'text-[#949494]')}>{layer.name}</span>
              <button aria-label={`Toggle ${layer.name}`} className={clsx('size-2.5 rounded-full', layer.selected ? 'bg-[#a6aaa8]' : 'bg-[#a0a0a0]')} />
            </li>
          ))}
        </ul>
      </div>
      <div className="flex h-[27px] items-center bg-[#373737] px-[5px]">
        <button aria-label="Edit all layers" className="flex size-5 items-center justify-center bg-[#282828]">
          <Svg size={17}>
            <path d="M2 2h10v10H2z" stroke="#a0a0a0" strokeWidth="2.200" />
            <path d="M6 15h9V6M9 18.500h9.500V9" stroke="#8c8c8c" strokeWidth="1.500" />
          </Svg>
        </button>
        <div className="mr-auto ml-[74px] flex gap-1">
          <button aria-label="Mask layer">
            <Svg size={16}>
              <path d="M1 3h18v14H1z" fill="#a0a0a0" />
              <circle cx="10" cy="10" r="4.500" fill="#373737" />
            </Svg>
          </button>
          <button aria-label="Adjustments">
            <Svg size={16}>
              <circle cx="10" cy="10" r="8.800" stroke="#a0a0a0" strokeWidth="1.600" />
              <path d="M14.500 5.500a6.500 6.500 0 11-9 9z" fill="#b4b4b4" />
            </Svg>
          </button>
          <button aria-label="Layer effects" className="h-4 w-4 border-y border-[#a0a0a0] text-xs/3 font-bold text-[#a0a0a0]">
            FX
          </button>
          <button aria-label="Live filters">
            <Svg size={16}>
              <path d="M5 3h10v2l-4 5 4 5v2H5v-2l4-5-4-5z" fill="#a8a8a8" />
            </Svg>
          </button>
        </div>
        <div className="flex gap-1">
          <button aria-label="New group">
            <Svg size={16}>
              <path d="M0 17V1h7l2 2h9v2H3v12z" fill="#a0a0a0" />
              <path d="M4 6h16v12H4z" fill="#a0a0a0" />
            </Svg>
          </button>
          <button aria-label="New pixel layer">
            <Svg size={16}>
              <path d="M3 1h14v18H3z" stroke="#a0a0a0" strokeWidth="1.500" />
              <path d="M7 4h2v2h2V4h2v2h-2v2H9V6H7zM7 9h2v2h2V9h2v2h-2v2H9v-2H7zM7 14h2v2H7zM11 14h2v2h-2z" fill="#a0a0a0" />
            </Svg>
          </button>
          <button aria-label="Delete layer">
            <Svg size={16}>
              <path d="M0 4h20M7 4V1h6v3M3 4v15h14V4M7.500 7v9M10 7v9M12.500 7v9" stroke="#a0a0a0" strokeWidth="1.400" />
            </Svg>
          </button>
        </div>
      </div>
    </section>
  )
}

const TICKS = [2, 10, 26, 49, 56, 71, 86, 107, 114, 123, 138]

function NavigatorPanel() {
  return (
    <section>
      <PanelTabs tabs={['Navigator', 'Transform', 'History']} active="Navigator" />
      <div className="flex h-[35px] items-center border-b border-[#2a2a2a] bg-[#373737] pt-1 pr-2.5 pl-3.5">
        <button aria-label="Zoom out" className="flex size-[17px] items-center justify-center bg-[#1f1f1f]">
          <span className="h-px w-2.5 bg-[#e4e4e4]" />
        </button>
        <div className="mr-[5px] ml-1.5 flex flex-1 flex-col gap-1">
          <input
            aria-label="Zoom"
            type="range"
            min="0"
            max="100"
            defaultValue="8"
            className="h-1 w-full appearance-none rounded-full bg-[linear-gradient(to_right,#4a6486_10%,#1f1f1f_10%)] outline-none [&::-webkit-slider-thumb]:h-2 [&::-webkit-slider-thumb]:w-1.5 [&::-webkit-slider-thumb]:appearance-none [&::-webkit-slider-thumb]:rounded-b-xs [&::-webkit-slider-thumb]:bg-[#e0e0e0]"
          />
          <svg height="3" viewBox="0 0 142 3" preserveAspectRatio="none" className="w-full" aria-hidden="true">
            {TICKS.map((x) => (
              <rect key={x} x={x} width="1" height="3" fill="#a8a8a8" />
            ))}
          </svg>
        </div>
        <button aria-label="Zoom in" className="relative flex size-[17px] items-center justify-center bg-[#1f1f1f]">
          <svg width="11" height="11" viewBox="0 0 11 11" stroke="#e4e4e4" aria-hidden="true">
            <path d="M0 5.500h11M5.500 0v11" />
          </svg>
        </button>
        <input aria-label="Zoom level" defaultValue="23 %" className="ml-1 h-[19px] w-[50px] rounded-xs bg-[#1f1f1f] px-1.5 text-xs/4 text-[#f0e6c8] outline-none" />
      </div>
      <div className="flex justify-center bg-[#373737] pt-1.5 pr-0.5 pb-[5px]">
        <div className="flex h-[243px] w-[188px] flex-col justify-end bg-white p-0.5 shadow">
          <div className="flex flex-1 flex-col justify-end border border-[#cfcfcf] px-1.5 pb-1 font-['Liberation_Serif',serif] text-[#555555]">
            <p className="flex items-baseline gap-1.5 text-[6px]/[10px] text-[#222222]">
              Nicky Drew <span className="text-[4px]/[10px] text-[#555555]">555-555-5555</span>
            </p>
            <p className="flex gap-2.5 text-[4px]/[10px]">
              nicky@nickydrewillustration.com <span>nickydrewillustration.com</span>
            </p>
          </div>
        </div>
      </div>
    </section>
  )
}

/* Menu bar */

function FileMenu() {
  return (
    <div role="menu" className="absolute top-full left-0 z-10 w-[335px] border-r border-b border-[#363636] bg-[#1b1b1b] shadow-md">
      {FILE_MENU.map((block, i) => (
        <div key={block[0].label}>
          {i > 0 && (
            <div className="flex h-[7px] items-center pl-[18px]">
              <div className="h-px flex-1 bg-[#333333]" />
            </div>
          )}
          {block.map((entry) => (
            <button
              key={entry.label}
              role="menuitem"
              disabled={entry.disabled}
              className={clsx(
                'flex w-full items-center pr-3 pl-5 text-left text-xs/4 whitespace-nowrap',
                entry.submenu || entry.active ? 'h-[18px]' : 'h-5',
                entry.active && 'my-px bg-[#6a6a6a]',
                entry.disabled ? 'text-[#7c7c7c]' : 'text-[#f0f0f0]',
              )}
            >
              <span className="w-[205px]">{entry.label}</span>
              <span>{entry.keys}</span>
              {entry.submenu && (
                <svg width="5" height="8" viewBox="0 0 5 8" fill="#f0f0f0" className="ml-auto" aria-hidden="true">
                  <path d="M0 0l5 4-5 4z" />
                </svg>
              )}
            </button>
          ))}
        </div>
      ))}
    </div>
  )
}

function MenuBar() {
  return (
    <header className="flex h-[33px] items-center bg-[#292929] px-2.5">
      <AppLogo size={20} />
      <nav className="ml-[15px] flex gap-[5px] pt-[3px] text-xs/4 text-[#f0f0f0]">
        {MENUS.map((menu) => (
          <div key={menu} className="relative">
            <button className={clsx('h-[22px] px-2.5', menu === 'File' && 'bg-[#1b1b1b]')}>{menu}</button>
            {menu === 'File' && <FileMenu />}
          </div>
        ))}
      </nav>
      <div className="ml-auto flex items-center gap-5 pb-1">
        <button aria-label="Minimize">
          <svg width="9" height="10" viewBox="0 0 9 10" aria-hidden="true">
            <path d="M0 6h9v3H0z" fill="#e8e8e8" />
          </svg>
        </button>
        <button aria-label="Restore">
          <svg width="10" height="10" viewBox="0 0 10 10" fill="none" stroke="#e8e8e8" strokeWidth="1.400" aria-hidden="true">
            <path d="M3.500 3V1h6v5H7M1 4h5.500v5H1z" />
          </svg>
        </button>
        <button aria-label="Close">
          <svg width="10" height="10" viewBox="0 0 10 10" fill="none" stroke="#e8e8e8" strokeWidth="1.600" aria-hidden="true">
            <path d="M1 1l8 8M9 1L1 9" />
          </svg>
        </button>
      </div>
    </header>
  )
}

export default function App() {
  return (
    <div className="relative flex min-h-screen flex-col bg-black pt-6 pb-[25px] font-['Lato',sans-serif]">
      <MenuBar />
      <Toolbar />
      <ContextBar />
      <div className="flex flex-1">
        <ToolBox />
        <Workspace />
        <aside className="flex w-[271px] shrink-0 flex-col border-l-[6px] border-[#2c2c2c] bg-[#373737]">
          <ColorPanel />
          <LayersPanel />
          <NavigatorPanel />
        </aside>
      </div>
      <footer className="flex h-[23px] items-center bg-[#333333] pt-1.5 pl-5 text-xs/4 whitespace-pre text-[#b4b4b4]">
        'nickydrewillustration.com' selected. <b className="text-white">Drag</b> to move selection. <b className="text-white">Click</b> another object to select it.{' '}
        <b className="text-white">Click</b> on an empty area to deselect selection. <b className="text-white">Return</b> to enter move/duplicate values.
      </footer>
      {/* Pointer */}
      <svg width="20" height="28" viewBox="0 0 20 28" className="absolute top-[508px] left-[152px] z-20" aria-hidden="true">
        <path d="M1.500 1.500v21l5-4 3.500 7.500 4-2-3.500-7h7z" fill="#f79a4b" stroke="#2a1a10" strokeWidth="1.400" />
      </svg>
    </div>
  )
}
